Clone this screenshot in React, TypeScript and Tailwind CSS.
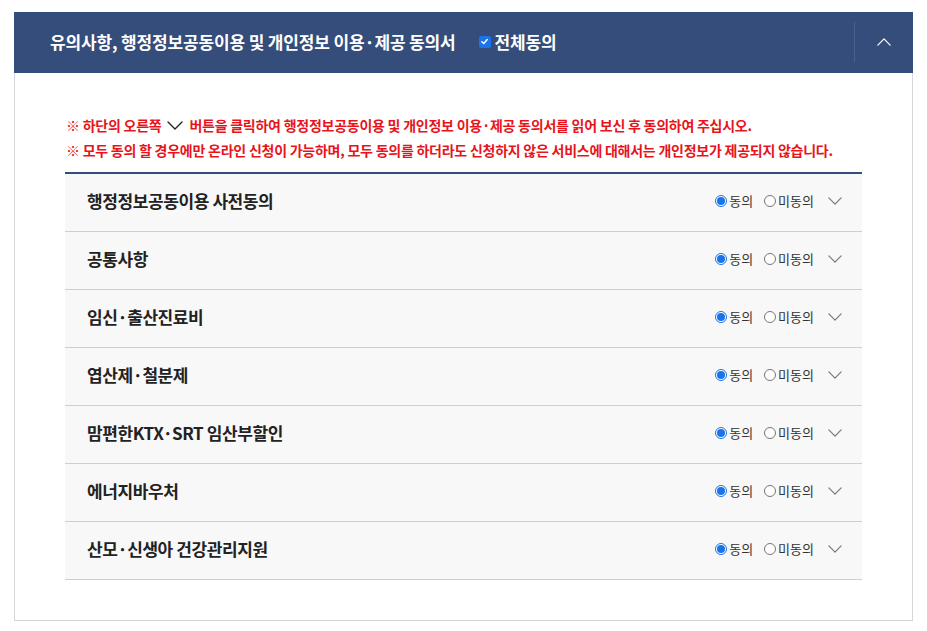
import { useState } from 'react';

const items = [
  '행정정보공동이용 사전동의',
  '공통사항',
  '임신·출산진료비',
  '엽산제·철분제',
  '맘편한KTX·SRT 임산부할인',
  '에너지바우처',
  '산모·신생아 건강관리지원',
];

function Chevron({ up, className }: { up?: boolean; className?: string }) {
  return (
    <svg viewBox="0 0 16 9" className={className} fill="none">
      <path
        d={up ? 'M1 8 L8 1 L15 8' : 'M1 1 L8 8 L15 1'}
        stroke="currentColor"
        strokeWidth="1.4"
        strokeLinecap="round"
        strokeLinejoin="round"
      />
    </svg>
  );
}

function Radio({ on }: { on: boolean }) {
  return (
    <span
      className={
        'inline-flex w-[12px] h-[12px] rounded-full items-center justify-center border ' +
        (on ? 'border-[#1a73e8] bg-white' : 'border-[#767676] bg-white')
      }
    >
      {on && <span className="w-[8px] h-[8px] rounded-full bg-[#1a73e8]" />}
    </span>
  );
}

function Row({ title }: { title: string }) {
  const [agree, setAgree] = useState(true);
  return (
    <div className="h-[58px] flex items-center pl-[22px] pr-[20px] pb-[3px] bg-[#f8f8f8] border-b border-[#cfcfcf]">
      <div className="flex-1 text-[17px] font-bold text-[#222] tracking-[-0.4px]">{title}</div>
      <button onClick={() => setAgree(true)} className="flex items-center gap-[2px] text-[13px] text-[#333]">
        <Radio on={agree} />
        <span>동의</span>
      </button>
      <button onClick={() => setAgree(false)} className="ml-[11px] flex items-center gap-[2px] text-[13px] text-[#333]">
        <Radio on={!agree} />
        <span>미동의</span>
      </button>
      <Chevron className="ml-[14px] w-[14px] h-[8px] text-[#777]" />
    </div>
  );
}

export default function App() {
  return (
    <div
      className="bg-white min-h-[631px] px-[14px] pt-[12px]"
      style={{ fontFamily: '"Noto Sans CJK KR", "Noto Sans", sans-serif' }}
    >
      <div className="h-[61px] bg-[#344d7a] flex items-center pl-[36px] pb-[2px]">
        <div className="text-white text-[17px] font-bold tracking-[-0.15px]">
          유의사항, 행정정보공동이용 및 개인정보 이용·제공 동의서
        </div>
        <label className="ml-[23px] flex items-center gap-[4px] text-white text-[17px] font-bold tracking-[-0.2px]">
          <span className="w-[12px] h-[12px] rounded-[2px] bg-[#1a73e8] flex items-center justify-center">
            <svg viewBox="0 0 10 10" className="w-[9px] h-[9px]" fill="none">
              <path d="M2 5.2 L4.2 7.3 L8 2.8" stroke="white" strokeWidth="1.6" strokeLinecap="round" strokeLinejoin="round" />
            </svg>
          </span>
          전체동의
        </label>
        <div className="ml-auto h-[40px] border-l border-[#4a6190]" />
        <div className="w-[58px] flex justify-center">
          <Chevron up className="w-[14px] h-[8px] text-white" />
        </div>
      </div>
      <div className="border border-t-0 border-[#d6d6d6] px-[50px] pt-[40px] pb-[40px]">
        <div className="text-[14px] leading-[25px] font-bold text-[#e8141b] tracking-[-0.25px] pl-[1px]">
          <p className="flex items-center">
            ※ 하단의 오른쪽
            <Chevron className="mx-[6px] w-[16px] h-[9px] text-[#222]" />
            버튼을 클릭하여 행정정보공동이용 및 개인정보 이용·제공 동의서를 읽어 보신 후 동의하여 주십시오.
          </p>
          <p>※ 모두 동의 할 경우에만 온라인 신청이 가능하며, 모두 동의를 하더라도 신청하지 않은 서비스에 대해서는 개인정보가 제공되지 않습니다.</p>
        </div>
        <div className="mt-[9px] border-t-2 border-[#344d7a]">
          {items.map((t) => (
            <Row key={t} title={t} />
          ))}
        </div>
      </div>
    </div>
  );
}
